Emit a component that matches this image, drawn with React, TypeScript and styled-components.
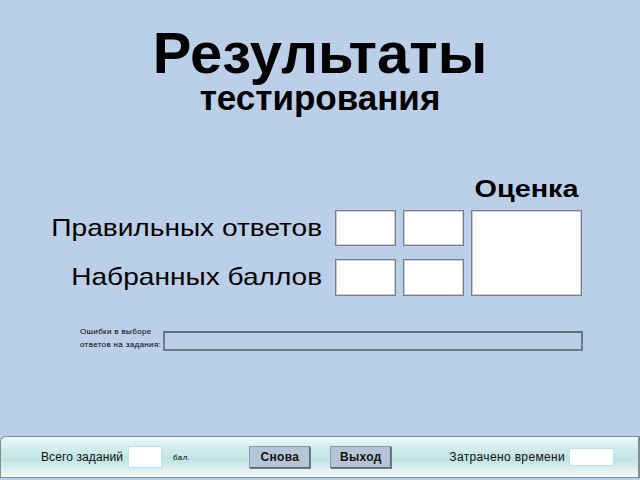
import { createGlobalStyle, styled } from 'styled-components'

const GlobalStyle = createGlobalStyle`
  html, body {
    margin: 0;
    padding: 0;
    background: #bccfe8;
    font-family: "Liberation Sans", Arial, sans-serif;
    color: #000;
  }
`

const Page = styled.div`
  width: 640px;
  height: 480px;
  display: flex;
  flex-direction: column;
  overflow: hidden;
`

const Main = styled.main`
  flex: 1;
  display: flex;
  flex-direction: column;
  padding-top: 26px;
`

const Title = styled.h1`
  margin: 0;
  font-size: 58px;
  line-height: 54px;
  font-weight: 700;
  text-align: center;
`

const Subtitle = styled.h2`
  margin: 1px 0 0;
  font-size: 35px;
  line-height: 33px;
  font-weight: 700;
  text-align: center;
`

const Results = styled.section`
  width: 582px;
  margin-top: 63px;
`

const CaptionRow = styled.div`
  display: flex;
  justify-content: flex-end;
  margin-bottom: 9px;
`

// the captions in the reference are drawn wider than the plain font
const Caption = styled.div`
  width: 111px;
  font-size: 24px;
  line-height: 24px;
  font-weight: 700;
  text-align: center;
  transform: scaleX(1.2);
`

const ScoreGrid = styled.div`
  display: grid;
  grid-template-columns: 328px 61px 61px 111px;
  grid-template-rows: 36px 37px;
  column-gap: 7px;
  row-gap: 13px;
`

const RowLabel = styled.div<{ $shift: number }>`
  padding-top: ${(p) => p.$shift}px;
  padding-right: 5px;
  font-size: 24px;
  line-height: 24px;
  text-align: right;
  white-space: nowrap;
  transform: scaleX(1.17);
  transform-origin: right center;
`

const Field = styled.div`
  background: #fff;
  border: 1px solid #7a7f86;
  box-shadow: inset 0 0 0 1px #c9cdd2;
`

const GradeField = styled(Field)`
  grid-column: 4;
  grid-row: 1 / span 2;
`

const ErrorsRow = styled.div`
  display: flex;
  align-items: flex-end;
  width: 503px;
  margin: 29px 0 0 80px;
  gap: 2px;
`

const ErrorsLabel = styled.div`
  font-size: 8px;
  line-height: 13px;
  letter-spacing: 0.35px;
  white-space: nowrap;
`

const ErrorsField = styled.div`
  flex: 1;
  height: 16px;
  border: 2px solid #6f7b89;
  border-top-color: #5f6b79;
`

const Footer = styled.footer`
  height: 40px;
  display: flex;
  align-items: center;
  padding-left: 40px;
  border: 1px solid #7f8e96;
  border-right-width: 2px;
  border-top-left-radius: 6px;
  margin-bottom: 2px;
  background: linear-gradient(
    to bottom,
    #eef9f9 0%,
    #d2ecec 30%,
    #c0e3e3 55%,
    #dcf0f0 80%,
    #f6fbfb 100%
  );
  font-size: 12px;
`

const Group = styled.div<{ $gap: number; $offset?: number }>`
  display: flex;
  align-items: center;
  gap: ${(p) => p.$gap}px;
  margin-left: ${(p) => p.$offset ?? 0}px;
`

const FooterText = styled.span<{ $spacing?: number }>`
  letter-spacing: ${(p) => p.$spacing ?? 0.1}px;
  color: #111;
  white-space: nowrap;
`

const SmallText = styled.span`
  font-size: 8px;
  letter-spacing: 0.4px;
  margin-left: 6px;
`

const FooterField = styled.div<{ $w: number; $h: number }>`
  width: ${(p) => p.$w}px;
  height: ${(p) => p.$h}px;
  background: #fff;
  border: 1px solid #bfe2e6;
  box-sizing: border-box;
`

const Button = styled.button`
  width: 61px;
  height: 22px;
  padding: 0;
  font-family: "Liberation Sans", Arial, sans-serif;
  font-size: 12px;
  font-weight: 700;
  letter-spacing: 0.3px;
  color: #111;
  background: #b5c5d6;
  border: 1px solid #8b98a6;
  border-right-color: #5e6a78;
  border-bottom-color: #5e6a78;
  box-shadow: 1px 1px 0 #6f7c8a;
`

const App = () => {
  return (
    <>
      <GlobalStyle />
      <Page>
        <Main>
          <Title>Результаты</Title>
          <Subtitle>тестирования</Subtitle>
          <Results>
            <CaptionRow>
              <Caption>Оценка</Caption>
            </CaptionRow>
            <ScoreGrid>
              <RowLabel $shift={6}>Правильных ответов</RowLabel>
              <Field />
              <Field />
              <GradeField />
              <RowLabel $shift={6}>Набранных баллов</RowLabel>
              <Field />
              <Field />
            </ScoreGrid>
          </Results>
          <ErrorsRow>
            <ErrorsLabel>
              Ошибки в выборе
              <br />
              ответов на задания:
            </ErrorsLabel>
            <ErrorsField />
          </ErrorsRow>
        </Main>
        <Footer>
          <Group $gap={5}>
            <FooterText>Всего заданий</FooterText>
            <FooterField $w={34} $h={22} />
            <SmallText>бал.</SmallText>
          </Group>
          <Group $gap={20} $offset={59}>
            <Button>Снова</Button>
            <Button>Выход</Button>
          </Group>
          <Group $gap={4} $offset={58}>
            <FooterText $spacing={0.35}>Затрачено времени</FooterText>
            <FooterField $w={45} $h={18} />
          </Group>
        </Footer>
      </Page>
    </>
  )
}

export default App
